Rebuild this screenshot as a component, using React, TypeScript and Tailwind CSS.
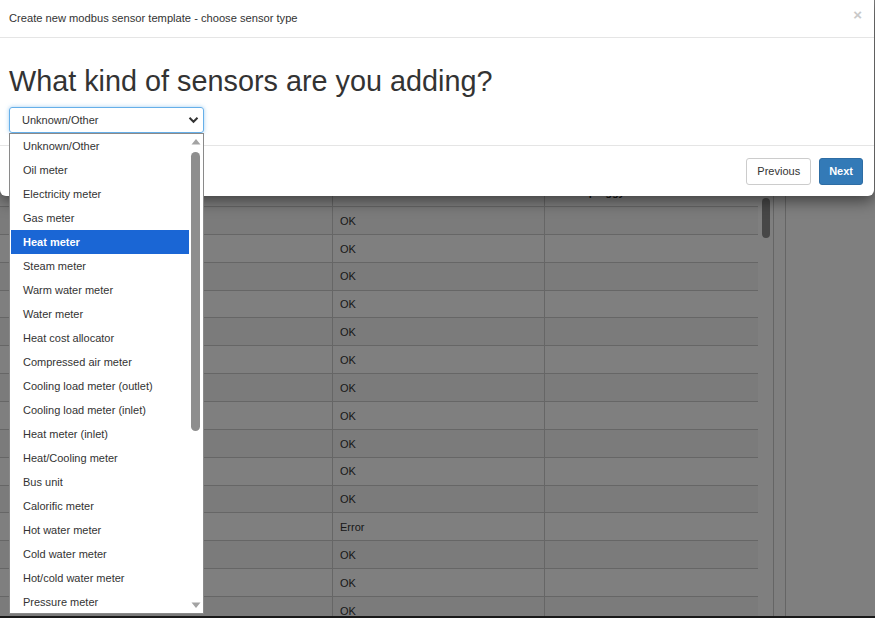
import React from "react";

const items = [
  "Unknown/Other",
  "Oil meter",
  "Electricity meter",
  "Gas meter",
  "Heat meter",
  "Steam meter",
  "Warm water meter",
  "Water meter",
  "Heat cost allocator",
  "Compressed air meter",
  "Cooling load meter (outlet)",
  "Cooling load meter (inlet)",
  "Heat meter (inlet)",
  "Heat/Cooling meter",
  "Bus unit",
  "Calorific meter",
  "Hot water meter",
  "Cold water meter",
  "Hot/cold water meter",
  "Pressure meter",
];

const statuses = [
  "OK", "OK", "OK", "OK", "OK", "OK", "OK", "OK", "OK", "OK", "OK",
  "Error", "OK", "OK", "OK",
];

export default function App() {
  return (
    <div className="relative w-[875px] h-[618px] overflow-hidden bg-white font-['Liberation_Sans',Arial,sans-serif] text-[#333]">
      {/* Background page */}
      <div className="flex h-full flex-col">
        <div className="flex flex-1 overflow-hidden">
          <div className="w-[758px] pt-[170px]">
            <div className="flex h-[37px] border-b border-[#ccc] text-[11px] font-bold">
              <div className="w-[332px]" />
              <div className="w-[212px] border-l border-[#ccc]" />
              <div className="flex-1 border-l border-[#ccc] pl-[8px] pt-[16px] leading-[13px]">
                <span className="ml-[10px]">Last pinggy</span>
              </div>
            </div>
            {statuses.map((s, i) => (
              <div
                key={i}
                className={`flex h-[27.86px] border-b border-[#ccc] text-[11px] ${
                  i % 2 === 0 ? "bg-[#f7f7f7]" : "bg-white"
                }`}
              >
                <div className="w-[332px]" />
                <div className="w-[212px] border-l border-[#ccc] pl-[7px] pt-[1px] flex items-center">
                  {s}
                </div>
                <div className="flex-1 border-l border-[#ccc]" />
              </div>
            ))}
          </div>
          <div className="relative w-[15px]">
            <div className="absolute left-[4px] top-[198px] h-[40px] w-[8px] rounded-full bg-[#8e8e8e]" />
          </div>
          <div className="w-[13px] border-l border-r border-[#cacaca]" />
          <div className="flex-1" />
        </div>
        <div className="h-[2px] bg-[#333]" />
      </div>

      {/* Overlay */}
      <div className="absolute inset-0 bg-black/50" />

      {/* Modal */}
      <div className="absolute left-0 top-0 w-[874px] rounded-b-[6px] bg-white shadow-[0_5px_15px_rgba(0,0,0,0.5)]">
        <div className="flex h-[38px] items-center justify-between border-b border-[#e5e5e5] pl-[9px] pr-[12px]">
          <span className="text-[11.15px]">Create new modbus sensor template - choose sensor type</span>
          <span className="text-[15px] font-bold leading-none text-[#c9c9c9] -mt-[8px]">×</span>
        </div>
        <div className="px-[9px] pt-[27px] pb-[12px]">
          <h1 className="text-[28.8px] leading-[32px] font-normal text-[#333]">
            What kind of sensors are you adding?
          </h1>
          <div className="mt-[10px] flex h-[26px] w-[195px] items-center justify-between rounded-[3px] border border-[#66afe9] pl-[12px] pr-[4px] text-[11px] shadow-[0_0_4px_rgba(102,175,233,0.6)]">
            <span>Unknown/Other</span>
            <svg width="11" height="8" viewBox="0 0 11 8">
              <path d="M1.5 1.8 L5.5 5.8 L9.5 1.8" fill="none" stroke="#333" strokeWidth="2" />
            </svg>
          </div>
        </div>
        <div className="flex h-[51px] justify-end gap-[8px] border-t border-[#e5e5e5] pr-[11px] pt-[12px]">
          <button className="h-[27px] rounded-[3px] border border-[#ccc] bg-white px-[10px] text-[11px] text-[#333]">
            Previous
          </button>
          <button className="h-[27px] rounded-[3px] border border-[#2e6da4] bg-[#337ab7] px-[9px] text-[11px] font-bold text-white">
            Next
          </button>
        </div>
      </div>

      {/* Dropdown list */}
      <div className="absolute left-[9px] top-[133px] flex h-[481px] w-[195px] border border-[#8a8a8a] bg-white">
        <div className="flex-1 pl-[1px]">
          {items.map((it) => (
            <div
              key={it}
              className={`flex h-[24px] items-center pl-[12px] text-[11px] ${
                it === "Heat meter" ? "bg-[#1a66d5] font-bold text-white" : "text-[#333]"
              }`}
            >
              {it}
            </div>
          ))}
        </div>
        <div className="relative w-[14px]">
          <svg className="absolute left-[2px] top-[4px]" width="10" height="7" viewBox="0 0 10 7">
            <path d="M0.5 6.5 L5 1 L9.5 6.5 Z" fill="#a3a3a3" />
          </svg>
          <div className="absolute left-[2px] top-[18px] h-[279px] w-[9px] rounded-full bg-[#8e8e8e]" />
          <svg className="absolute left-[2px] bottom-[4px]" width="10" height="7" viewBox="0 0 10 7">
            <path d="M0.5 0.5 L5 6 L9.5 0.5 Z" fill="#a3a3a3" />
          </svg>
        </div>
      </div>
    </div>
  );
}
